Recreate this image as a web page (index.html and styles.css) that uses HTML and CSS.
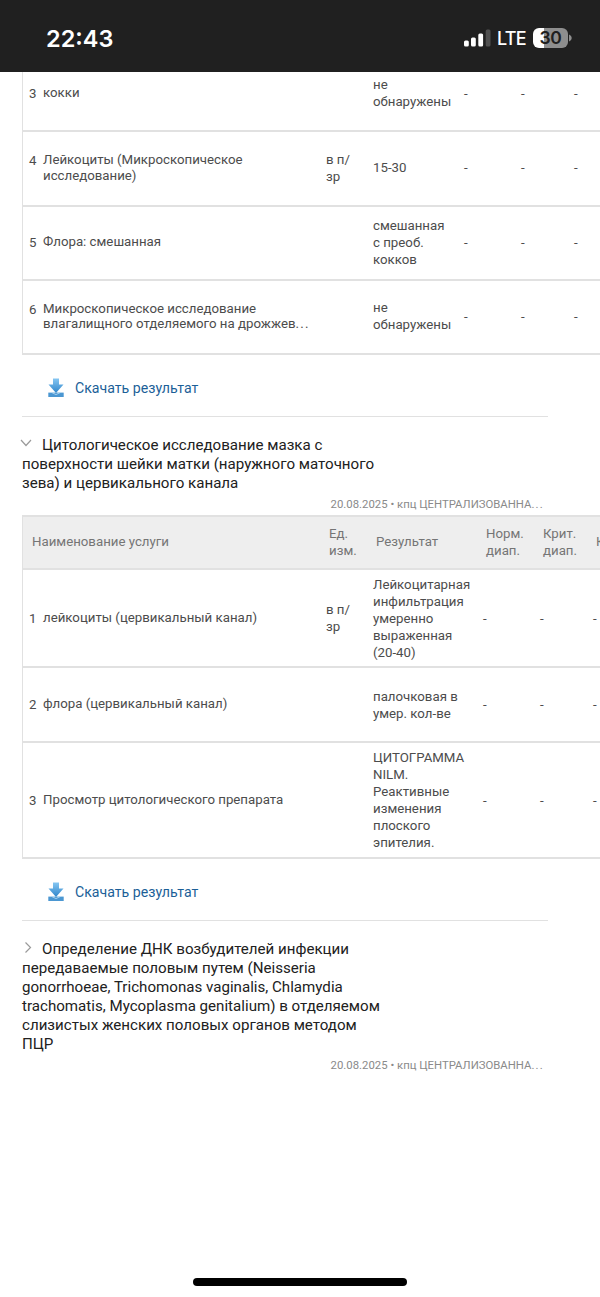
FILE: index.html
```html
<!DOCTYPE html>
<html lang="ru">
<head>
    <meta charset="UTF-8">
    <meta name="viewport" content="width=device-width, initial-scale=1.0">
    <title>Результаты исследований</title>
    <link rel="stylesheet" href="styles.css">
</head>
<body>
    <header class="status-bar">
        <span class="clock">22:43</span>
        <div class="status-icons">
            <svg class="signal" width="27" height="18" viewBox="0 0 27 18">
                <rect x="0" y="11.5" width="4.8" height="6" rx="1.5" fill="#fff"/>
                <rect x="7" y="8.5" width="4.8" height="9" rx="1.5" fill="#fff"/>
                <rect x="14.3" y="4.5" width="4.8" height="13" rx="1.5" fill="#fff"/>
                <rect x="21.7" y="0.5" width="4.8" height="17" rx="1.5" fill="#505050"/>
            </svg>
            <span class="network">LTE</span>
            <div class="battery"><span>30</span></div>
            <svg class="battery-tip" width="3" height="8" viewBox="0 0 3 8">
                <path d="M0 0.5C3.6 2 3.6 6 0 7.5Z" fill="#8e8e8e"/>
            </svg>
        </div>
    </header>

    <main class="results">
        <section class="table table-first">
            <div class="row">
                <div class="name"><span class="num">3</span><span>кокки</span></div>
                <div class="unit"></div>
                <div class="value">не<br>обнаружены</div>
                <div class="dash">-</div><div class="dash">-</div><div class="dash">-</div>
            </div>
            <div class="row row-tall">
                <div class="name"><span class="num">4</span><span>Лейкоциты (Микроскопическое<br>исследование)</span></div>
                <div class="unit">в п/<br>зр</div>
                <div class="value">15-30</div>
                <div class="dash">-</div><div class="dash">-</div><div class="dash">-</div>
            </div>
            <div class="row">
                <div class="name"><span class="num">5</span><span>Флора: смешанная</span></div>
                <div class="unit"></div>
                <div class="value">смешанная<br>с преоб.<br>кокков</div>
                <div class="dash">-</div><div class="dash">-</div><div class="dash">-</div>
            </div>
            <div class="row">
                <div class="name"><span class="num">6</span><span>Микроскопическое исследование<br>влагалищного отделяемого на дрожжев<span class="dots">...</span></span></div>
                <div class="unit"></div>
                <div class="value">не<br>обнаружены</div>
                <div class="dash">-</div><div class="dash">-</div><div class="dash">-</div>
            </div>
        </section>

        <a class="download" href="#">
            <svg width="16" height="20" viewBox="0 0 16 20">
                <path d="M0.3 14.6H15.7V19H0.3Z" fill="#4b97d2"/>
                <path d="M5 0.5H11V6.5H15.5L8 15L0.5 6.5H5Z" fill="url(#arrow)"/>
                <path d="M3 14.2L8 16.6L13 14.2" fill="none" stroke="#b9dcf4" stroke-width="0.8"/>
                <defs>
                    <linearGradient id="arrow" x1="0" y1="0" x2="0" y2="1">
                        <stop offset="0" stop-color="#86c6f2"/>
                        <stop offset="1" stop-color="#2f86cb"/>
                    </linearGradient>
                </defs>
            </svg>
            <span>Скачать результат</span>
        </a>

        <section class="study">
            <h2 class="study-title">
                <svg class="chevron" width="12" height="12" viewBox="0 0 12 12"><path d="M1 3L6 8.5L11 3"/></svg>Цитологическое исследование мазка с<br>поверхности шейки матки (наружного маточного<br>зева) и цервикального канала
            </h2>
            <p class="study-meta">20.08.2025 • кпц ЦЕНТРАЛИЗОВАННА<span class="dots">...</span></p>
            <div class="table table-second">
                <div class="row row-head">
                    <div class="name">Наименование услуги</div>
                    <div class="unit">Ед.<br>изм.</div>
                    <div class="value">Результат</div>
                    <div class="range">Норм.<br>диап.</div>
                    <div class="range">Крит.<br>диап.</div>
                    <div class="range">К</div>
                </div>
                <div class="row row-leuko">
                    <div class="name"><span class="num">1</span><span>лейкоциты (цервикальный канал)</span></div>
                    <div class="unit">в п/<br>зр</div>
                    <div class="value">Лейкоцитарная<br>инфильтрация<br>умеренно<br>выраженная<br>(20-40)</div>
                    <div class="dash">-</div><div class="dash">-</div><div class="dash">-</div>
                </div>
                <div class="row row-tall">
                    <div class="name"><span class="num">2</span><span>флора (цервикальный канал)</span></div>
                    <div class="unit"></div>
                    <div class="value">палочковая в<br>умер. кол-ве</div>
                    <div class="dash">-</div><div class="dash">-</div><div class="dash">-</div>
                </div>
                <div class="row row-cyto">
                    <div class="name"><span class="num">3</span><span>Просмотр цитологического препарата</span></div>
                    <div class="unit"></div>
                    <div class="value">ЦИТОГРАММА<br>NILM.<br>Реактивные<br>изменения<br>плоского<br>эпителия.</div>
                    <div class="dash">-</div><div class="dash">-</div><div class="dash">-</div>
                </div>
            </div>
        </section>

        <a class="download" href="#">
            <svg width="16" height="20" viewBox="0 0 16 20">
                <path d="M0.3 14.6H15.7V19H0.3Z" fill="#4b97d2"/>
                <path d="M5 0.5H11V6.5H15.5L8 15L0.5 6.5H5Z" fill="url(#arrow)"/>
                <path d="M3 14.2L8 16.6L13 14.2" fill="none" stroke="#b9dcf4" stroke-width="0.8"/>
            </svg>
            <span>Скачать результат</span>
        </a>

        <section class="study">
            <h2 class="study-title">
                <svg class="chevron" width="12" height="12" viewBox="0 0 12 12"><path d="M5.5 1.5L10.5 6.5L5.5 11.5"/></svg>Определение ДНК возбудителей инфекции<br>передаваемые половым путем (Neisseria<br>gonorrhoeae, Trichomonas vaginalis, Chlamydia<br>trachomatis, Mycoplasma genitalium) в отделяемом<br>слизистых женских половых органов методом<br>ПЦР
            </h2>
            <p class="study-meta">20.08.2025 • кпц ЦЕНТРАЛИЗОВАННА<span class="dots">...</span></p>
        </section>
    </main>

    <footer class="home-bar"></footer>
</body>
</html>
```
FILE: styles.css
```css
* {
    margin: 0;
    padding: 0;
    box-sizing: border-box;
}

:root {
    --line: #e1e1e1;
    --text: #4c4c4c;
    --link: #1c5f98;
}

body {
    display: flex;
    flex-direction: column;
    height: 1297px;
    overflow: hidden;
    background-color: #fff;
    color: var(--text);
    font-family: Roboto, sans-serif;
    font-size: 13.25px;
}

.status-bar {
    display: flex;
    justify-content: space-between;
    align-items: center;
    flex: none;
    height: 72px;
    padding: 4px 28px 0 46px;
    background-color: #202020;
    color: #fff;
    font-family: Inter, sans-serif;
}

.clock {
    font-size: 23.5px;
    font-weight: 600;
}

.status-icons {
    display: flex;
    align-items: center;
}

.network {
    margin-left: 6px;
    font-size: 18px;
    font-weight: 500;
    letter-spacing: -0.7px;
}

.battery {
    width: 35px;
    height: 20px;
    margin: 0 1px 0 7px;
    border-radius: 6px;
    background: linear-gradient(to right, #fff 30%, #8e8e8e 30%);
    color: #202020;
    font-size: 17.5px;
    font-weight: 600;
    line-height: 20px;
    letter-spacing: -0.4px;
    text-align: center;
}

.results {
    flex: 1;
    overflow: hidden;
    padding-left: 22px;
}

.table {
    border-left: 1px solid var(--line);
}

.table-first {
    margin-top: -14px;
}

.row {
    display: grid;
    align-items: center;
    height: 74px;
    padding-bottom: 2px;
    border-bottom: 2px solid var(--line);
    line-height: 17px;
}

.table-first .row {
    grid-template-columns: 303px 47px 90px 57px 53px 60px;
}

.table-second .row {
    grid-template-columns: 303px 47px 109px 57px 53px 60px;
}

.table .row-tall {
    height: 75px;
}

.table-second .row-tall,
.table-second .row-leuko,
.table-second .row-cyto {
    padding-bottom: 0;
}

.table .row-leuko {
    height: 98px;
}

.table .row-cyto {
    height: 116px;
}

.name {
    display: flex;
    padding-left: 6px;
    line-height: 15.5px;
}

.num {
    width: 14px;
    flex: none;
    padding-top: 1px;
}

.dots {
    letter-spacing: 1.2px;
}

.table .row-head {
    height: 55px;
    border-top: 2px solid var(--line);
    background-color: #eee;
    color: #757575;
}

.row-head .name {
    padding-left: 9px;
}

.row-head .unit,
.row-head .value,
.row-head .range {
    padding-left: 3px;
}

.table .row-head .range {
    padding-left: 4px;
}

.dash {
    padding-left: 1px;
}

.download {
    display: flex;
    align-items: center;
    gap: 11px;
    width: 526px;
    height: 62px;
    padding: 5px 0 0 26px;
    border-bottom: 1px solid var(--line);
    color: var(--link);
    font-size: 14.15px;
    text-decoration: none;
}

.study {
    padding-top: 19px;
}

.study-title {
    color: #212121;
    font-size: 15.12px;
    font-weight: 400;
    line-height: 19px;
    white-space: nowrap;
}

.chevron {
    margin: 0 10px 0 -2px;
    vertical-align: 1px;
    fill: none;
    stroke: #9a9a9a;
    stroke-width: 1.2;
}

.study-meta {
    width: 522px;
    padding: 2px 0 1px;
    color: #8a8a8a;
    font-size: 11.35px;
    line-height: 19px;
    text-align: right;
}

.home-bar {
    flex: none;
    width: 214px;
    height: 8px;
    margin: 0 auto 11px;
    border-radius: 4px;
    background-color: #000;
}
```
